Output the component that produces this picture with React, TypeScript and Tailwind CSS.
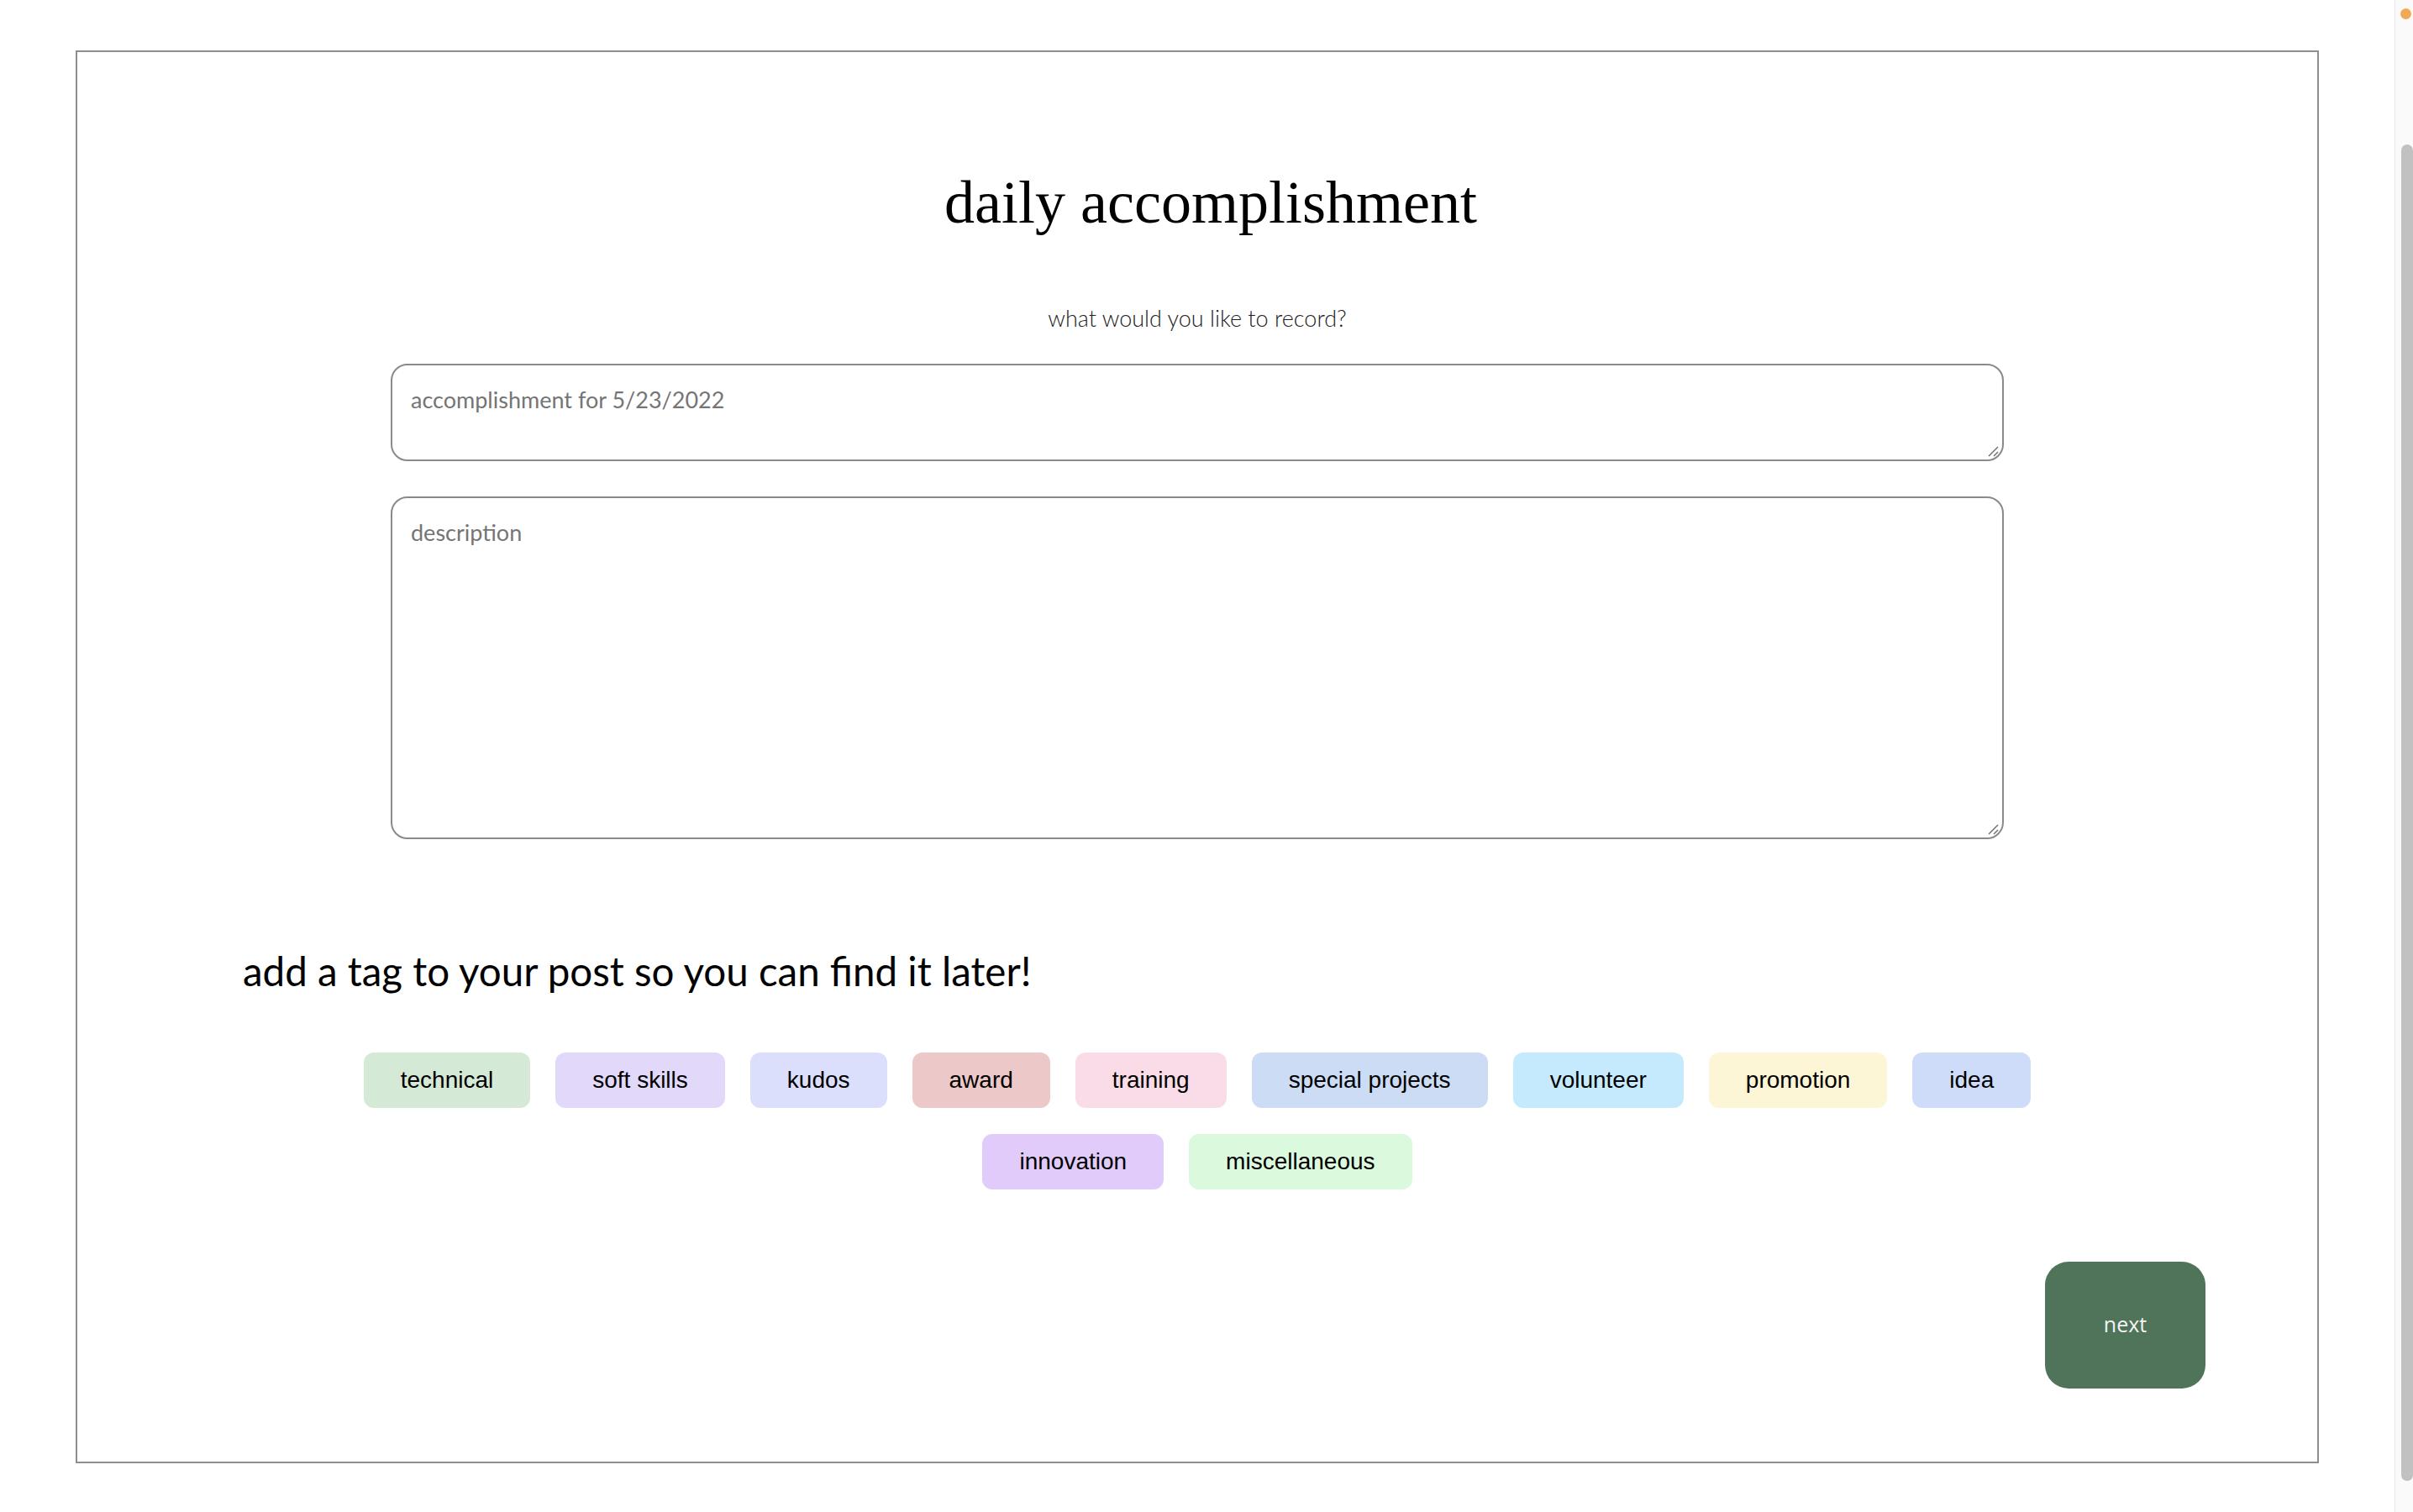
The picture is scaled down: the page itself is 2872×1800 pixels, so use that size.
import React from "react";

const tags = [
  { name: "technical", color: "bg-[#d4e9d6]" },
  { name: "soft skills", color: "bg-[#e2d9fa]" },
  { name: "kudos", color: "bg-[#dbdffb]" },
  { name: "award", color: "bg-[#ecc8c8]" },
  { name: "training", color: "bg-[#f9dce8]" },
  { name: "special projects", color: "bg-[#cbdcf4]" },
  { name: "volunteer", color: "bg-[#c6eafd]" },
  { name: "promotion", color: "bg-[#fdf6d6]" },
  { name: "idea", color: "bg-[#cedcfa]" },
  { name: "innovation", color: "bg-[#e1cbfa]" },
  { name: "miscellaneous", color: "bg-[#dbf9dc]" },
];

function Grip() {
  return (
    <svg
      className="absolute right-[6px] bottom-[5px]"
      width="14"
      height="14"
      viewBox="0 0 14 14"
      fill="none"
      stroke="#6f6f6f"
      strokeWidth="1.5"
    >
      <line x1="13" y1="2" x2="2" y2="13" />
      <line x1="13" y1="8" x2="8" y2="13" />
    </svg>
  );
}

function Field({ placeholder, height, className }: { placeholder: string; height: string; className: string }) {
  return (
    <div className={`relative ${className}`}>
      <textarea
        placeholder={placeholder}
        className={`block w-[1920px] ${height} resize-none rounded-[20px] border-2 border-[#8a8a8a] px-[22px] pt-[24px] pb-[20px] text-[27px] leading-tight font-['Lato',sans-serif] placeholder:text-[#757575] outline-none`}
      />
      <Grip />
    </div>
  );
}

export default function App() {
  return (
    <div className="flex h-[1800px] w-full bg-white overflow-hidden">
      <main className="flex-1">
        <section className="ml-[90px] mt-[60px] w-[2670px] h-[1682px] border-2 border-[#8e8e8e] flex flex-col items-center">
          <h1 className="mt-[143px] ml-[32px] text-[72px] leading-none text-black font-['Liberation_Serif',serif]">
            daily accomplishment
          </h1>
          <p className="mt-[88px] text-[27px] leading-none font-light text-[#222] font-['Lato',sans-serif]">
            what would you like to record?
          </p>

          <Field placeholder="accomplishment for 5/23/2022" height="h-[116px]" className="mt-[41px]" />
          <Field placeholder="description" height="h-[408px]" className="mt-[42px]" />

          <h2 className="self-start ml-[197px] mt-[133px] text-[47.5px] leading-none text-black font-['Lato',sans-serif]">
            add a tag to your post so you can find it later!
          </h2>

          <div className="mt-[73px] w-[2010px] flex flex-wrap justify-center gap-x-[30px] gap-y-[31px]">
            {tags.map((tag) => (
              <button
                key={tag.name}
                className={`${tag.color} h-[66px] px-[44px] rounded-[12px] text-[28px] text-black font-['Liberation_Sans',Arial,sans-serif]`}
              >
                {tag.name}
              </button>
            ))}
          </div>

          <button className="self-end mr-[133px] mt-[86px] w-[191px] h-[151px] rounded-[28px] bg-[#4f7459] text-[25px] text-[#f4f4f4] font-['Open_Sans',sans-serif]">
            next
          </button>
        </section>
      </main>

      {/* scrollbar strip */}
      <div className="relative w-[22px] h-full bg-[#fafafa] border-l border-[#e8e8e8]">
        <span className="absolute right-[2px] top-[10px] w-[13px] h-[13px] rounded-full bg-[#f0a955]" />
        <div className="absolute right-0 top-[172px] w-[14px] h-[1591px] rounded-full bg-[#c1c1c1]" />
      </div>
    </div>
  );
}
